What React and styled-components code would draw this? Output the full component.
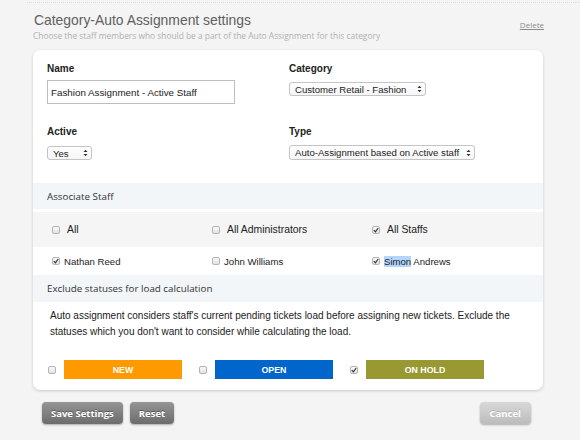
import styled, { createGlobalStyle } from "styled-components";

const GlobalStyle = createGlobalStyle`
  html, body {
    margin: 0;
    padding: 0;
    background: #f4f4f4;
  }
  body {
    font-family: "Liberation Sans", Arial, sans-serif;
    color: #333;
  }
`;

const staff = [
  { name: "All", checked: false },
  { name: "All Administrators", checked: false },
  { name: "All Staffs", checked: true },
  { name: "Nathan Reed", checked: true },
  { name: "John Williams", checked: false },
  { name: "Simon Andrews", checked: true, highlight: "Simon" },
];

const statuses = [
  { label: "NEW", color: "#ff9900", checked: false },
  { label: "OPEN", color: "#0066cc", checked: false },
  { label: "ON HOLD", color: "#999933", checked: true },
];

const Page = styled.div`
  width: 580px;
  height: 440px;
  overflow: hidden;
`;

const TopRule = styled.div`
  margin-left: 27px;
  height: 2px;
  border-bottom: 1px dotted #dcdcdc;
`;

const Header = styled.div`
  display: flex;
  justify-content: space-between;
  align-items: flex-start;
  padding: 8px 36px 0 34px;
  height: 47px;
  box-sizing: border-box;
`;

const Title = styled.h1`
  margin: 0;
  font-family: "Liberation Sans", Arial, sans-serif;
  font-size: 13.9px;
  font-weight: normal;
  color: #606060;
  line-height: 18px;
`;

const Subtitle = styled.p`
  margin: 1px 0 0 -1px;
  font-family: "Open Sans", sans-serif;
  font-size: 8.4px;
  line-height: 11px;
  color: #b0b0b0;
`;

const DeleteLink = styled.a`
  margin-top: 8px;
  font-family: "Open Sans", sans-serif;
  font-size: 8px;
  color: #8a8a8a;
  text-decoration: underline;
`;

const Card = styled.div`
  margin: 0 37px 0 33px;
  background: #fff;
  border-radius: 7px;
  box-shadow: 0 1px 3px rgba(0, 0, 0, 0.18);
  padding-bottom: 11px;
  overflow: hidden;
`;

const FormGrid = styled.div`
  display: grid;
  grid-template-columns: 242px 1fr;
  row-gap: 22px;
  padding: 13px 14px 23px;
`;

const Field = styled.div`
  display: flex;
  flex-direction: column;
  align-items: flex-start;
`;

const Label = styled.label`
  font-size: 10px;
  font-weight: bold;
  color: #222;
  line-height: 12px;
  margin-bottom: ${(p) => p.$gap || 5}px;
`;

const TextInput = styled.div`
  width: 188px;
  height: 24px;
  box-sizing: border-box;
  border: 1px solid #bdbdbd;
  display: flex;
  align-items: center;
  padding-left: 3px;
  font-size: 9.8px;
  color: #222;
`;

const Select = styled.div`
  width: ${(p) => p.$width}px;
  height: ${(p) => p.$height || 14}px;
  margin-top: ${(p) => p.$offset || 0}px;
  box-sizing: border-box;
  border: 1px solid #c4c4c4;
  border-radius: 3px;
  background: linear-gradient(#ffffff, #f6f6f6);
  display: flex;
  align-items: center;
  justify-content: space-between;
  padding: 0 3px 0 5px;
  font-size: 9.6px;
  color: #222;
  white-space: nowrap;
`;

const SectionBar = styled.div`
  background: #f2f6f9;
  height: ${(p) => p.$height}px;
  display: flex;
  align-items: center;
  padding-left: 14px;
  font-family: "Open Sans", sans-serif;
  font-size: 9.8px;
  color: #333;
`;

const StaffGrid = styled.div`
  margin-top: 3px;
  display: grid;
  grid-template-columns: repeat(3, 160px);
  padding-left: 19px;
  background: linear-gradient(#f5f5f5 0 35px, #fff 35px);
`;

const StaffCell = styled.div`
  height: ${(p) => (p.$first ? 35 : 28)}px;
  display: flex;
  align-items: center;
  gap: ${(p) => (p.$first ? 7 : 4)}px;
  font-size: ${(p) => (p.$first ? 10.4 : 9.6)}px;
  color: #222;
`;

const Highlight = styled.span`
  background: #b4d5fe;
`;

const Box = styled.span`
  width: 8px;
  height: 8px;
  box-sizing: border-box;
  border: 1px solid #b3b3b3;
  border-radius: 2px;
  background: linear-gradient(#fafafa, #e2e2e2);
  display: inline-flex;
  align-items: center;
  justify-content: center;
  flex-shrink: 0;
`;

const Paragraph = styled.p`
  margin: 0;
  padding: 6px 30px 0 17px;
  font-size: 10px;
  line-height: 15.5px;
  color: #222;
`;

const StatusRow = styled.div`
  display: flex;
  gap: 17px;
  padding: 21px 0 0 15px;
`;

const StatusGroup = styled.div`
  display: flex;
  align-items: center;
  gap: 8px;
`;

const StatusTag = styled.div`
  width: 118px;
  height: 19px;
  background: ${(p) => p.$color};
  color: #fff;
  font-size: 8.8px;
  font-weight: bold;
  display: flex;
  align-items: center;
  justify-content: center;
`;

const Footer = styled.div`
  display: flex;
  align-items: center;
  padding: 12px 49px 0 42px;
  gap: 7px;
`;

const Button = styled.button`
  height: 22px;
  padding: 0 ${(p) => p.$pad || 9}px;
  border: none;
  border-radius: 4px;
  font-family: "Open Sans", sans-serif;
  font-weight: bold;
  font-size: 9.5px;
  color: #fff;
  text-shadow: 0 -1px 0 rgba(0, 0, 0, ${(p) => (p.$light ? 0.15 : 0.35)});
  background: ${(p) =>
    p.$light
      ? "linear-gradient(#d8d8d8, #bcbcbc)"
      : "linear-gradient(#959595, #6c6c6c)"};
  box-shadow: 0 1px 2px rgba(0, 0, 0, 0.3);
  margin-left: ${(p) => (p.$right ? "auto" : "0")};
`;

const Check = () => (
  <svg width="6" height="6" viewBox="0 0 6 6">
    <path d="M0.8 3.2 L2.4 4.8 L5.2 1" fill="none" stroke="#333" strokeWidth="1.2" />
  </svg>
);

const Checkbox = ({ checked }) => <Box>{checked && <Check />}</Box>;

const Arrows = () => (
  <svg width="5" height="8" viewBox="0 0 5 8">
    <path d="M0.5 3 L2.5 0.8 L4.5 3 Z M0.5 5 L2.5 7.2 L4.5 5 Z" fill="#333" />
  </svg>
);

const App = () => {
  return (
    <Page>
      <GlobalStyle />
      <TopRule />
      <Header>
        <div>
          <Title>Category-Auto Assignment settings</Title>
          <Subtitle>
            Choose the staff members who should be a part of the Auto Assignment for this category
          </Subtitle>
        </div>
        <DeleteLink>Delete</DeleteLink>
      </Header>

      <Card>
        <FormGrid>
          <Field>
            <Label>Name</Label>
            <TextInput>Fashion Assignment - Active Staff</TextInput>
          </Field>
          <Field>
            <Label>Category</Label>
            <Select $width={137} $offset={2}>
              Customer Retail - Fashion <Arrows />
            </Select>
          </Field>
          <Field>
            <Label $gap={8}>Active</Label>
            <Select $width={45}>
              Yes <Arrows />
            </Select>
          </Field>
          <Field>
            <Label $gap={7}>Type</Label>
            <Select $width={186} $height={15}>
              Auto-Assignment based on Active staff <Arrows />
            </Select>
          </Field>
        </FormGrid>

        <SectionBar $height={26}>Associate Staff</SectionBar>
        <StaffGrid>
          {staff.map((s, i) => (
            <StaffCell key={s.name} $first={i < 3}>
              <Checkbox checked={s.checked} />
              {s.highlight ? (
                <span>
                  <Highlight>{s.highlight}</Highlight>
                  {s.name.slice(s.highlight.length)}
                </span>
              ) : (
                s.name
              )}
            </StaffCell>
          ))}
        </StaffGrid>

        <SectionBar $height={27}>Exclude statuses for load calculation</SectionBar>
        <Paragraph>
          Auto assignment considers staff's current pending tickets load before assigning new tickets. Exclude the
          statuses which you don't want to consider while calculating the load.
        </Paragraph>
        <StatusRow>
          {statuses.map((s) => (
            <StatusGroup key={s.label}>
              <Checkbox checked={s.checked} />
              <StatusTag $color={s.color}>{s.label}</StatusTag>
            </StatusGroup>
          ))}
        </StatusRow>
      </Card>

      <Footer>
        <Button>Save Settings</Button>
        <Button>Reset</Button>
        <Button $light $right $pad={10}>
          Cancel
        </Button>
      </Footer>
    </Page>
  );
};

export default App;
